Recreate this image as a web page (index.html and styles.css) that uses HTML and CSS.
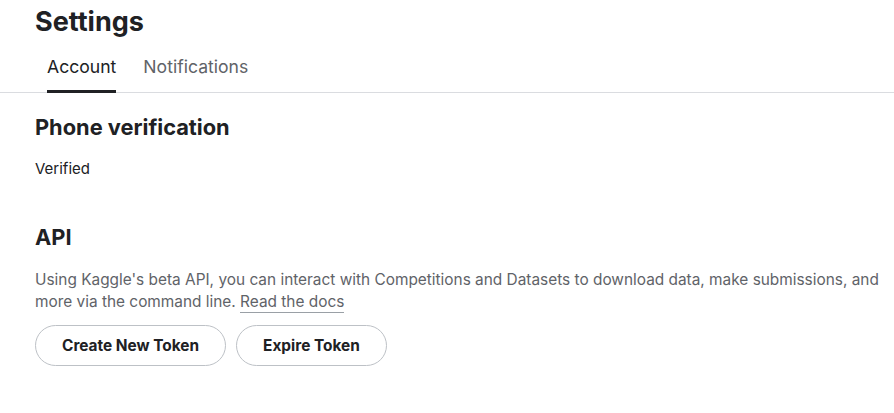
FILE: index.html
```html
<!DOCTYPE html>
<html>
<head>
<meta charset="utf-8">
<link rel="stylesheet" href="styles.css">
</head>
<body>
<div class="page">
  <header class="head">
    <h1 class="title">Settings</h1>
    <nav class="tabs">
      <a class="tab active">Account</a>
      <a class="tab">Notifications</a>
    </nav>
  </header>
  <main class="content">
    <section class="section">
      <h2 class="heading">Phone verification</h2>
      <p class="text">Verified</p>
    </section>
    <section class="section api">
      <h2 class="heading">API</h2>
      <p class="desc">Using Kaggle's beta API, you can interact with Competitions and Datasets to download data, make submissions, and more via the command line. <a class="link">Read the docs</a></p>
      <div class="buttons">
        <button class="btn btn-create">Create New Token</button>
        <button class="btn btn-expire">Expire Token</button>
      </div>
    </section>
  </main>
</div>
</body>
</html>
```
FILE: styles.css
```css
* { box-sizing: border-box; }
html, body { margin: 0; padding: 0; background: #fff; }
body { font-family: Inter, "Noto Sans", sans-serif; color: #202124; }
.head { border-bottom: 1px solid #dadce0; }
.title { margin: 0; padding: 5px 0 0 35px; font-size: 27px; font-weight: 700; line-height: 34px; color: #202124; }
.tabs { display: flex; gap: 27px; padding-left: 47px; margin-top: 17px; }
.tab { font-size: 17.6px; line-height: 22px; color: #5f6368; padding-bottom: 12px; border-bottom: 3px solid transparent; margin-bottom: -1px; }
.tab.active { color: #202124; border-bottom-color: #202124; border-radius: 2px 2px 0 0; }
.content { padding: 0 14px 0 35px; }
.heading { margin: 0; font-size: 21.8px; font-weight: 700; line-height: 28px; color: #202124; }
.section:first-child { padding-top: 20px; }
.text { margin: 17.5px 0 0; font-size: 15px; line-height: 20px; }
.api { margin-top: 44px; }
.desc { margin: 18px 0 0; font-size: 15.4px; line-height: 22px; color: #5f6368; }
.link { color: #5f6368; text-decoration: none; border-bottom: 1px solid #9aa0a6; padding-bottom: 1px; }
.buttons { display: flex; gap: 10px; margin-top: 12px; }
.btn { font-family: inherit; font-size: 15.4px; font-weight: 700; color: #202124; background: #fff; border: 1px solid #bdc1c6; border-radius: 21px; height: 41px; padding: 0 26px; }
```
